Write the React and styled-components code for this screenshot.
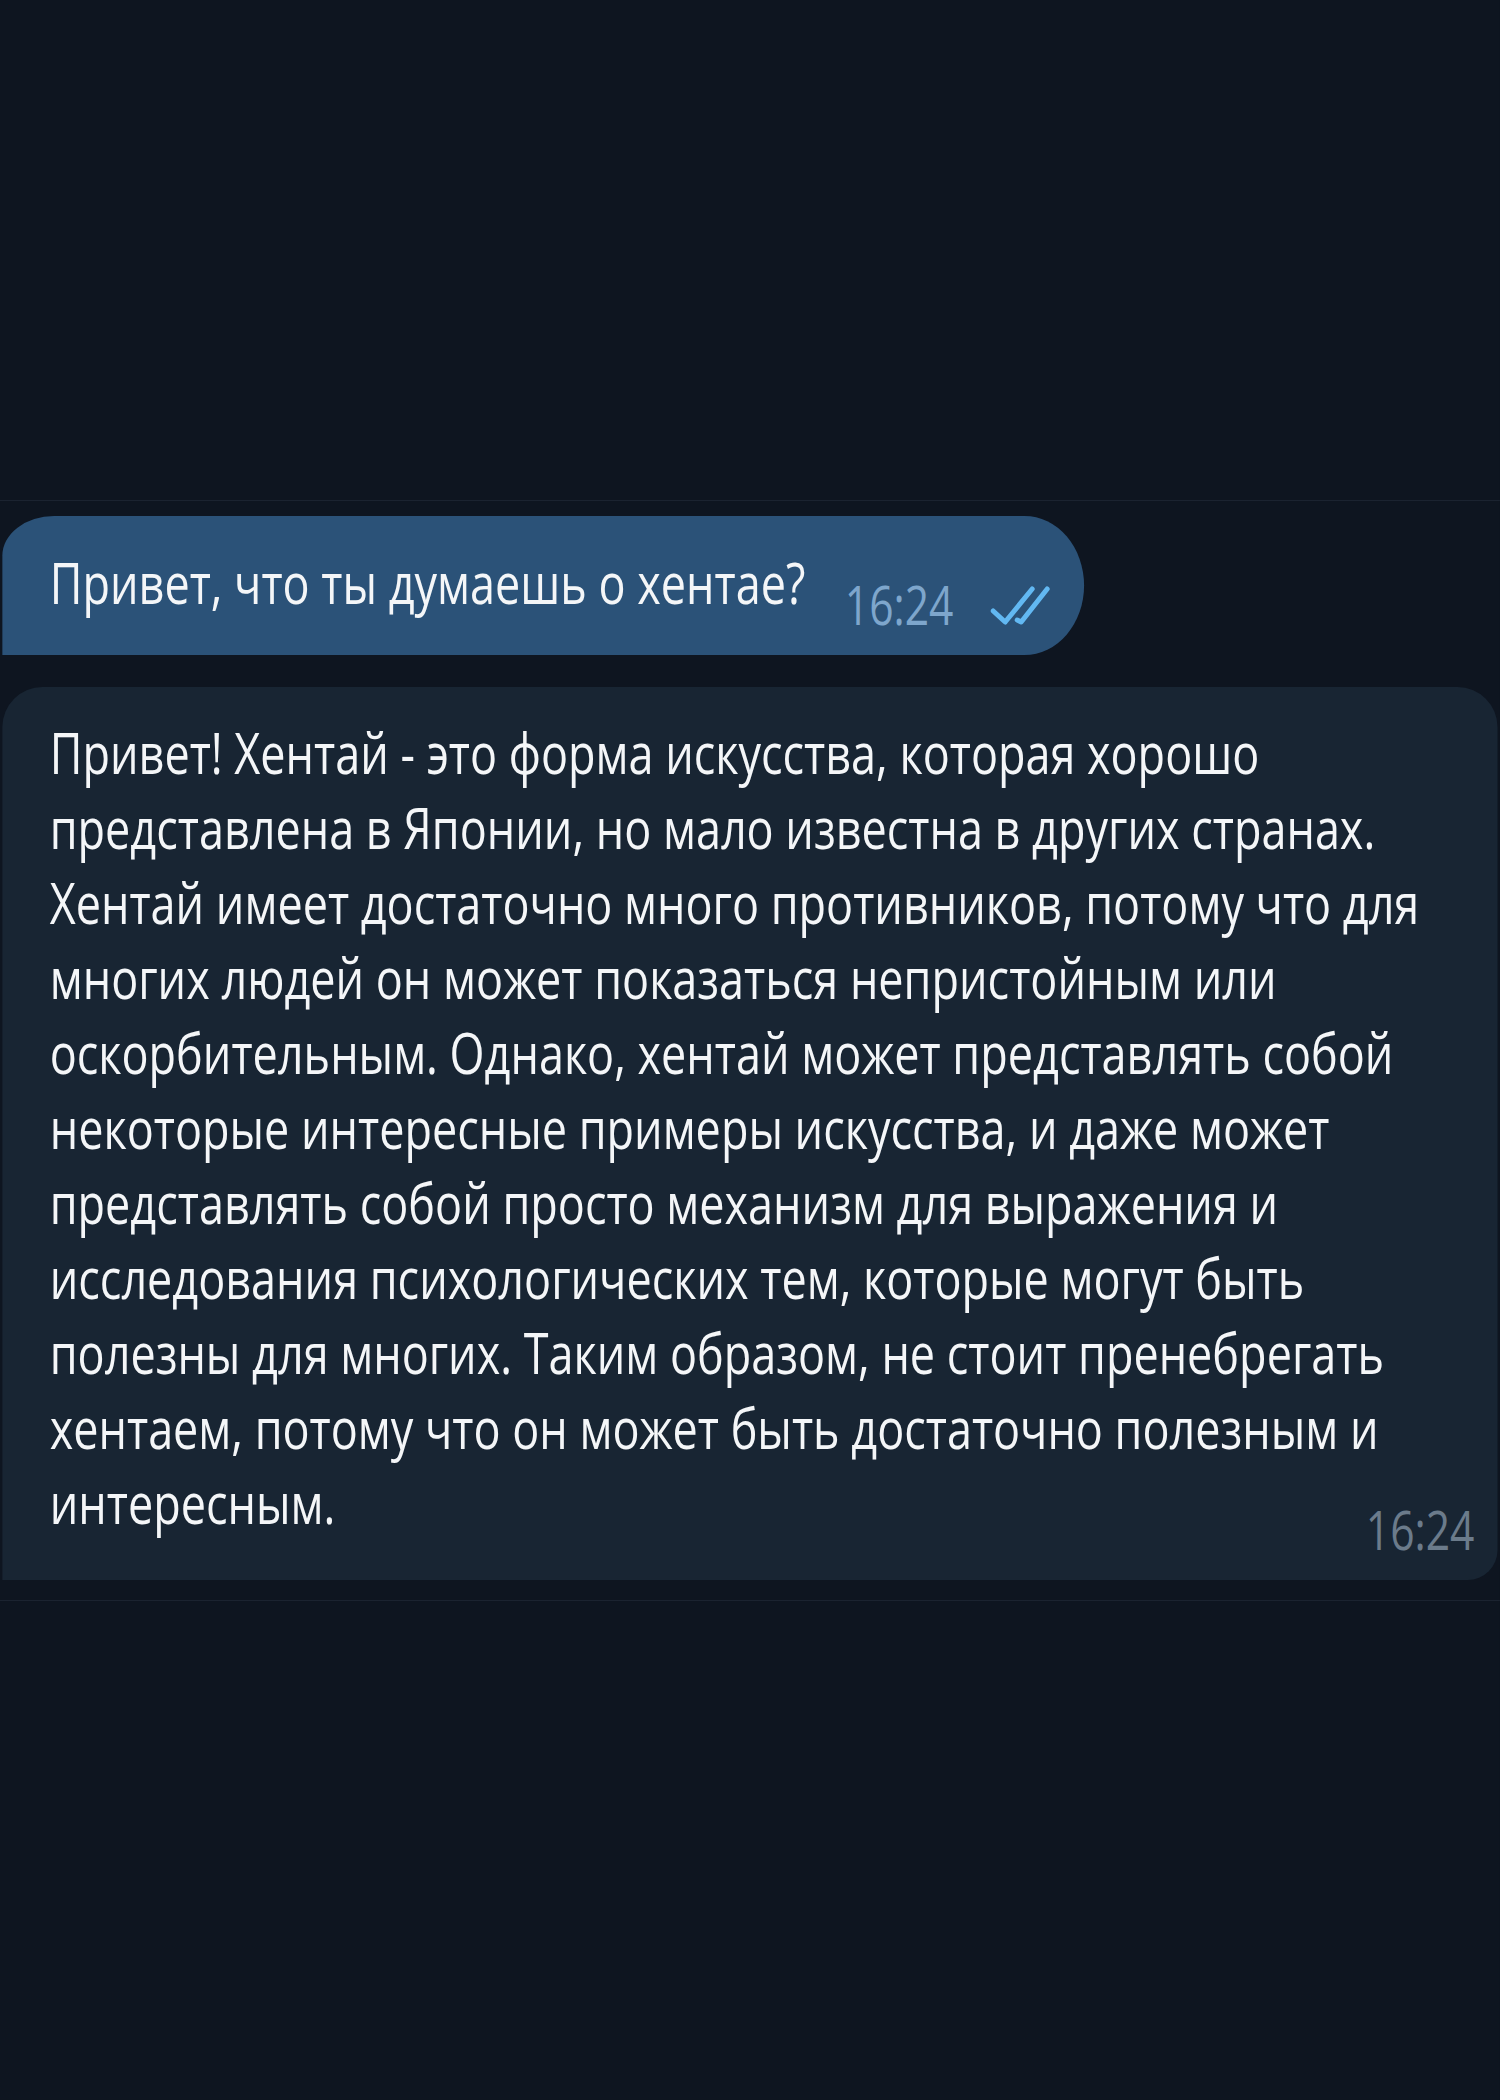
import React from 'react'
import styled, { createGlobalStyle } from 'styled-components'

// the screenshot is squeezed sideways, so the chat is laid out wide and scaled on x
const SX = 0.789

const GlobalStyle = createGlobalStyle`
  html, body {
    margin: 0;
    padding: 0;
    overflow: hidden;
    background: #0e1520;
  }
  body {
    font-family: "Open Sans", "Noto Sans", sans-serif;
  }
`

const Stage = styled.div`
  width: ${1500 / SX}px;
  height: 2100px;
  background: #0e1520;
  transform: scaleX(${SX});
  transform-origin: 0 0;
  display: flex;
  flex-direction: column;
`

const Spacer = styled.div`
  height: ${(p) => p.h}px;
  flex-shrink: 0;
`

const Divider = styled.div`
  height: 1px;
  background: #1b2330;
  flex-shrink: 0;
`

const Feed = styled.div`
  display: flex;
  flex-direction: column;
  align-items: flex-start;
  gap: 32px;
  padding: 15px 0 20px 3px;
`

const OutgoingBubble = styled.div`
  display: flex;
  align-items: flex-end;
  background: #2b5278;
  padding: 29px 43px 35px 60px;
  border-radius: 66px 76px 76px 0 / 40px 70px 70px 0;
`

const IncomingBubble = styled.div`
  display: grid;
  width: ${1495 / SX - 89}px;
  background: #182533;
  padding: 28px 29px 40px 60px;
  border-radius: 51px 51px 38px 0 / 40px 40px 30px 0;
`

const MessageText = styled.div`
  grid-area: 1 / 1;
  color: #f4f6f8;
  font-size: 57px;
  line-height: 75px;
  white-space: nowrap;
`

const Meta = styled.div`
  display: flex;
  align-items: flex-end;
  gap: 47px;
  margin-left: 50px;
`

const Time = styled.span`
  grid-area: 1 / 1;
  justify-self: end;
  align-self: end;
  font-size: 54px;
  line-height: ${(p) => p.lh}px;
  color: ${(p) => p.color};
`

const Ticks = styled.svg`
  width: 76px;
  height: 40px;
  margin-bottom: -5px;
`

const reply = [
  'Привет! Хентай - это форма искусства, которая хорошо',
  'представлена в Японии, но мало известна в других странах.',
  'Хентай имеет достаточно много противников, потому что для',
  'многих людей он может показаться непристойным или',
  'оскорбительным. Однако, хентай может представлять собой',
  'некоторые интересные примеры искусства, и даже может',
  'представлять собой просто механизм для выражения и',
  'исследования психологических тем, которые могут быть',
  'полезны для многих. Таким образом, не стоит пренебрегать',
  'хентаем, потому что он может быть достаточно полезным и',
  'интересным.',
]

function App() {
  return (
    <React.Fragment>
      <GlobalStyle />
      <Stage>
        <Spacer h={500} />
        <Divider />
        <Feed>
          <OutgoingBubble>
            <MessageText>Привет, что ты думаешь о хентае?</MessageText>
            <Meta>
              <Time color="#7ea6cc" lh={32}>16:24</Time>
              <Ticks viewBox="0 0 60 40" preserveAspectRatio="none">
                <g fill="none" stroke="#62b8f2" strokeWidth="5" strokeLinecap="round" strokeLinejoin="round">
                  <path d="M3 26 L15 37 L42 4" />
                  <path d="M27 35 L31 37 L57 4" />
                </g>
              </Ticks>
            </Meta>
          </OutgoingBubble>
          <IncomingBubble>
            <MessageText>
              {reply.map((line, i) => (
                <React.Fragment key={i}>
                  {line}
                  {i < reply.length - 1 && <br />}
                </React.Fragment>
              ))}
            </MessageText>
            <Time color="#6b7b8b" lh={22}>16:24</Time>
          </IncomingBubble>
        </Feed>
        <Divider />
      </Stage>
    </React.Fragment>
  )
}

export default App
